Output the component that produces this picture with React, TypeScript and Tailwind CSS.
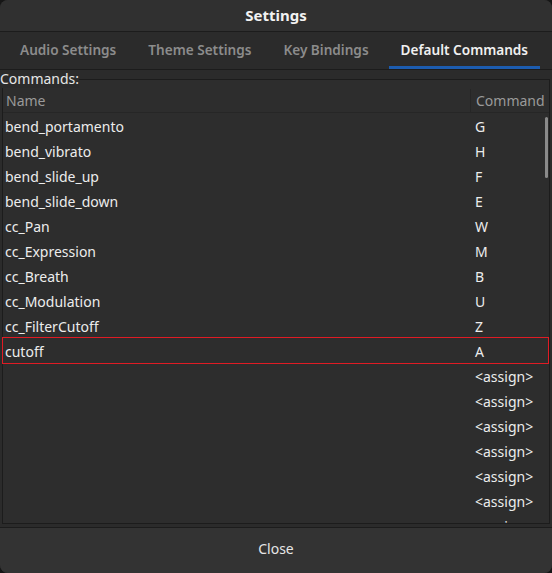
import React from 'react';

const tabs = ['Audio Settings', 'Theme Settings', 'Key Bindings', 'Default Commands'];

const commands: [string, string][] = [
  ['bend_portamento', 'G'],
  ['bend_vibrato', 'H'],
  ['bend_slide_up', 'F'],
  ['bend_slide_down', 'E'],
  ['cc_Pan', 'W'],
  ['cc_Expression', 'M'],
  ['cc_Breath', 'B'],
  ['cc_Modulation', 'U'],
  ['cc_FilterCutoff', 'Z'],
  ['cutoff', 'A'],
  ['', '<assign>'],
  ['', '<assign>'],
  ['', '<assign>'],
  ['', '<assign>'],
  ['', '<assign>'],
  ['', '<assign>'],
  ['', '<assign>'],
];

const App: React.FC = () => {
  return (
    <div className="w-[552px] h-[573px] bg-[#161616] font-['Noto_Sans',sans-serif]">
      <div className="w-full h-full rounded-[8px] overflow-hidden bg-[#2b2b2b] flex flex-col">
        {/* Title */}
        <div className="h-[32px] shrink-0 bg-[#303030] border-b border-[#1c1c1c] flex items-center justify-center text-[15px] font-bold text-[#f2f2f2]">
          Settings
        </div>

        {/* Tabs */}
        <div className="h-[38px] shrink-0 bg-[#2b2b2b] border-b border-[#1c1c1c] flex items-stretch gap-2 px-2">
          {tabs.map((t, i) => (
            <div
              key={t}
              className={
                i === 3
                  ? 'px-3 flex items-center whitespace-nowrap text-[13.6px] font-semibold text-[#f0f0f0] border-b-[3px] border-[#1c5cb0] pt-[3px]'
                  : 'px-3 flex items-center whitespace-nowrap text-[13.6px] font-semibold text-[#8c8c8c]'
              }
            >
              {t}
            </div>
          ))}
        </div>

        {/* Frame */}
        <fieldset className="mx-[2px] p-0 border border-[#1c1c1c] h-[454px] bg-[#2d2d2d] min-w-0">
          <legend className="p-0 -ml-[3px] text-[14px] leading-[18px] text-[#e6e6e6] bg-[#2b2b2b]">Commands:</legend>
          <div className="relative h-[435px] overflow-x-visible overflow-y-clip">
            <div className="h-[25px] flex border-b border-[#262626] text-[14px] text-[#9a9a9a]">
              <div className="w-[467px] pl-[3px] pt-px flex items-center">Name</div>
              <div className="flex-1 border-l border-[#262626] mt-[1px] pl-[5px] flex items-center">Command</div>
            </div>
            {commands.map(([name, key], i) => (
              <div
                key={i}
                className={
                  name === 'cutoff'
                    ? 'h-[27px] -my-px -ml-px pt-px flex items-center text-[14px] text-[#ececec] border border-[#e01b24] relative z-10'
                    : 'h-[25px] pt-px flex items-center text-[14px] text-[#ececec]'
                }
              >
                <div className="w-[467px] pl-[2px]">{name}</div>
                <div className="flex-1 pl-[5px]">{key}</div>
              </div>
            ))}
            <div className="absolute right-[1px] top-[29px] w-[3px] h-[61px] rounded-full bg-[#8a8a8a]" />
          </div>
        </fieldset>

        {/* Close */}
        <div className="mt-[3px] flex-1 bg-[#333333] border-t border-[#1c1c1c] flex items-center justify-center pb-[4px] text-[14px] text-[#e6e6e6]">
          Close
        </div>
      </div>
    </div>
  );
};

export default App;
